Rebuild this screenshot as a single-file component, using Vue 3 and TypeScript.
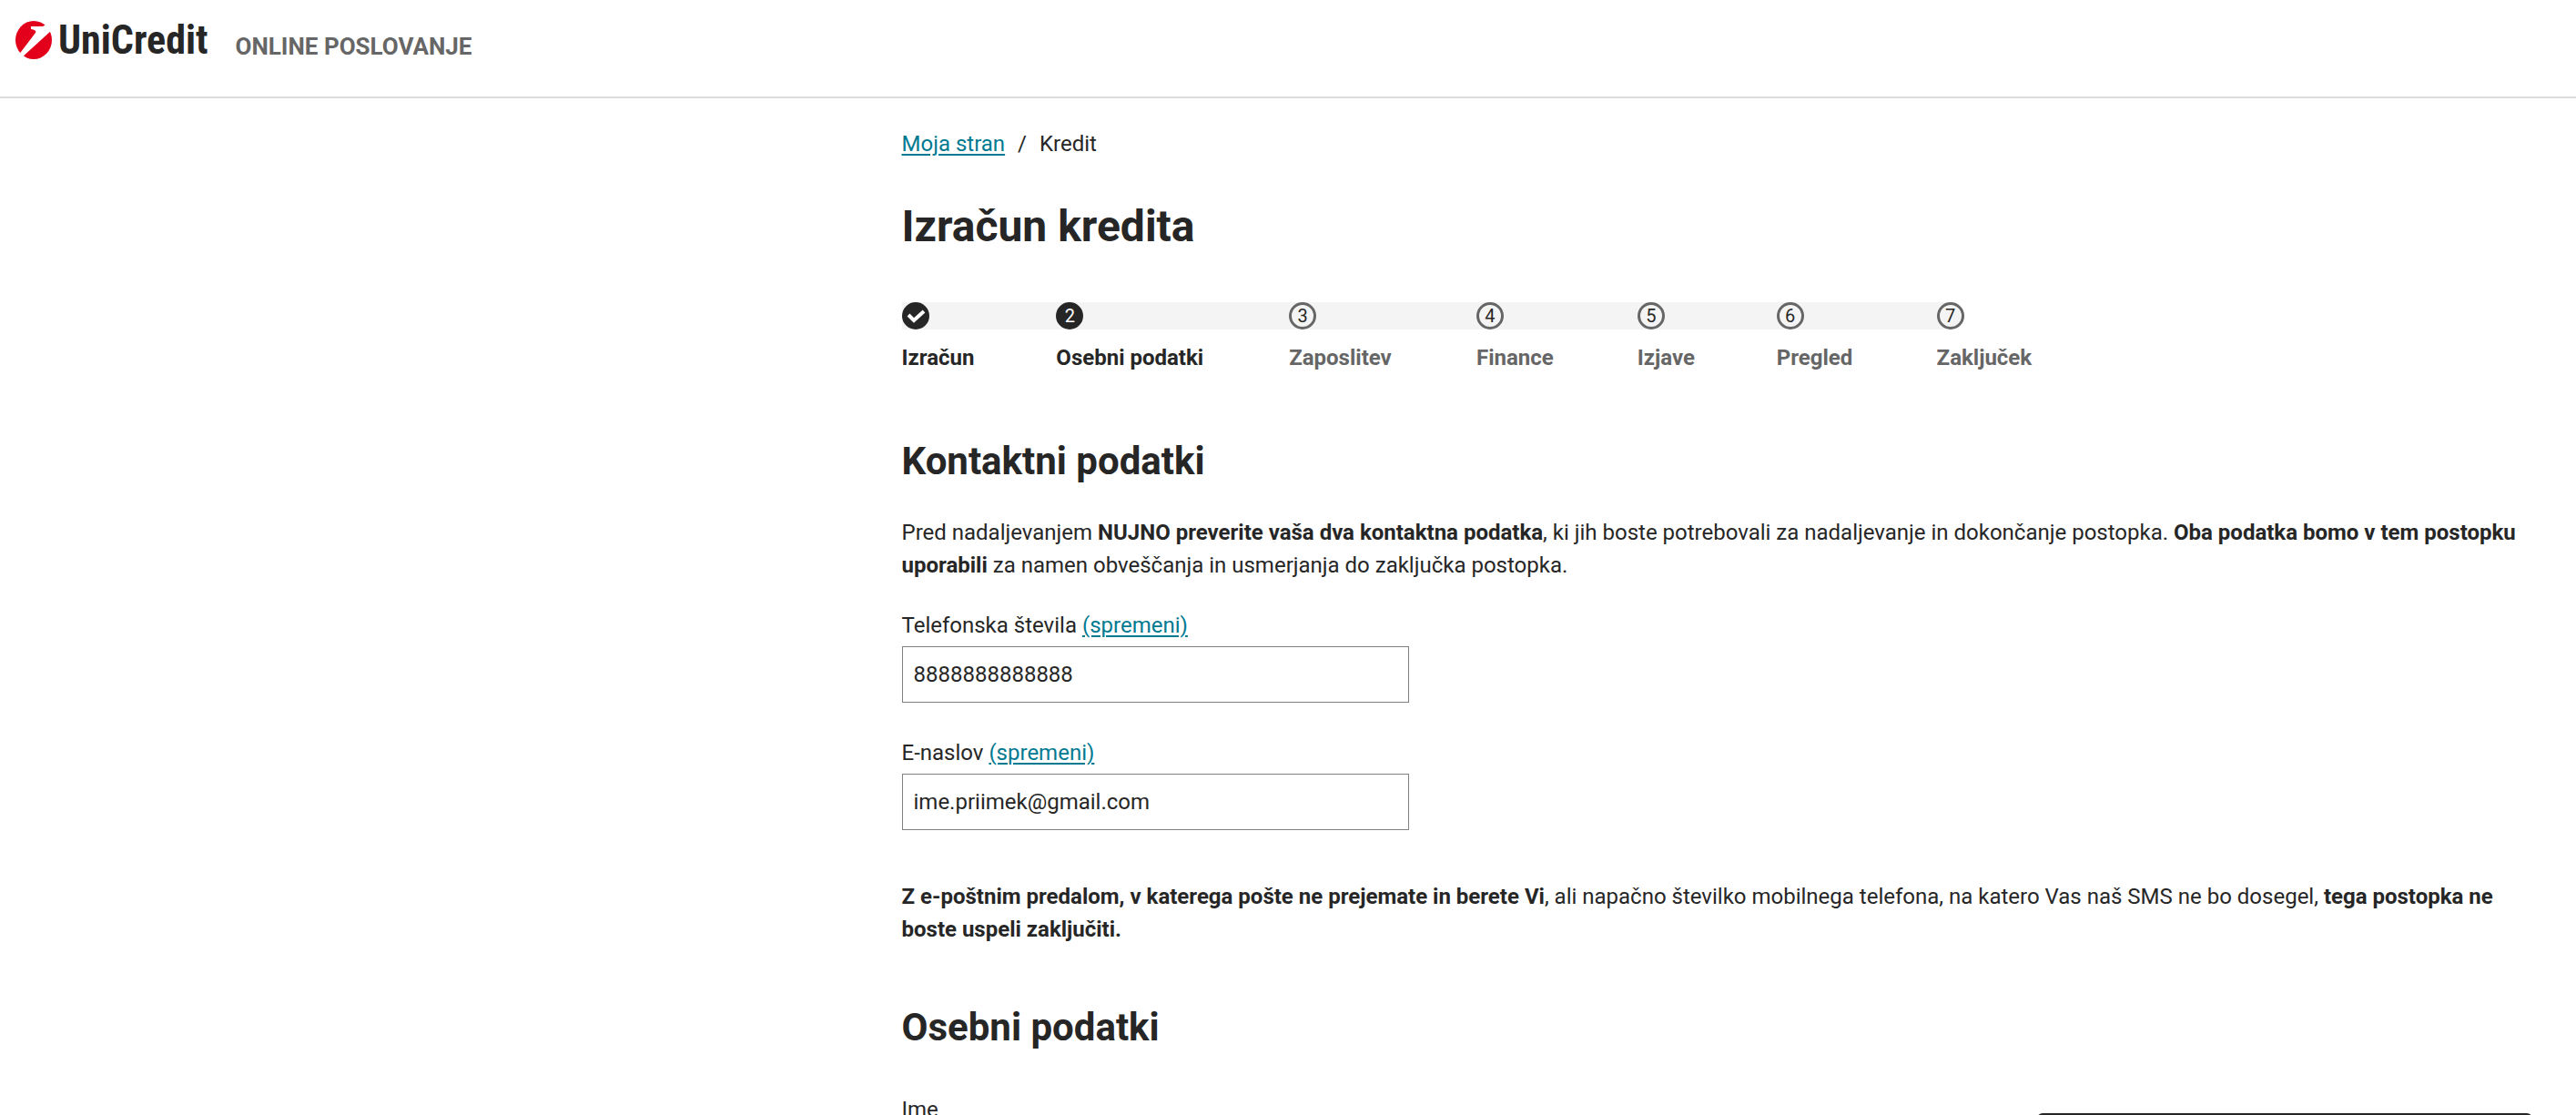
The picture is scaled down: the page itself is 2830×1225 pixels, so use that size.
<script setup lang="ts">
import { ref } from 'vue'

interface Step {
  label: string
  state: 'done' | 'current' | 'todo'
}

const steps: Step[] = [
  { label: 'Izračun', state: 'done' },
  { label: 'Osebni podatki', state: 'current' },
  { label: 'Zaposlitev', state: 'todo' },
  { label: 'Finance', state: 'todo' },
  { label: 'Izjave', state: 'todo' },
  { label: 'Pregled', state: 'todo' },
  { label: 'Zaključek', state: 'todo' },
]

const phone = ref('8888888888888')
const email = ref('ime.priimek@gmail.com')
</script>

<template>
  <div class="page">
    <header class="top">
      <a class="logo" href="#">
        <svg class="mark" viewBox="0 0 40 42" aria-hidden="true">
          <ellipse cx="20" cy="21" rx="20" ry="21" fill="#e2001a" />
          <path d="M17 6 L30 6 L35 3 L41 7 L41 9 L6 41 L3 38 L22 13 C23 11 22 10 17 9 Z" fill="#fff" />
        </svg>
        <span class="wordmark">UniCredit</span>
      </a>
      <span class="tagline">ONLINE POSLOVANJE</span>
    </header>

    <main class="content">
      <nav class="crumbs">
        <a href="#">Moja stran</a>
        <span>/</span>
        <span>Kredit</span>
      </nav>

      <h1>Izračun kredita</h1>

      <ol class="steps">
        <li v-for="(step, i) in steps" :key="step.label" class="step" :class="step.state">
          <div class="track">
            <span class="dot">
              <svg v-if="step.state === 'done'" viewBox="0 0 30 30" aria-hidden="true">
                <path d="M7 14 L13 20 L24 10" fill="none" stroke="#fff" stroke-width="4" />
              </svg>
              <template v-else>{{ i + 1 }}</template>
            </span>
          </div>
          <span class="name">{{ step.label }}</span>
        </li>
      </ol>

      <section>
        <h2>Kontaktni podatki</h2>
        <p>
          Pred nadaljevanjem <strong>NUJNO preverite vaša dva kontaktna podatka</strong>, ki jih boste
          potrebovali za nadaljevanje in dokončanje postopka.
          <strong>Oba podatka bomo v tem postopku uporabili</strong> za namen obveščanja in usmerjanja do
          zaključka postopka.
        </p>
        <div class="field">
          <div><label for="phone">Telefonska števila</label> <a href="#">(spremeni)</a></div>
          <input id="phone" v-model="phone" type="text" />
        </div>
        <div class="field">
          <div><label for="email">E-naslov</label> <a href="#">(spremeni)</a></div>
          <input id="email" v-model="email" type="text" />
        </div>
        <p class="warning">
          <strong>Z e-poštnim predalom, v katerega pošte ne prejemate in berete Vi</strong>, ali napačno
          številko mobilnega telefona, na katero Vas naš SMS ne bo dosegel,
          <strong>tega postopka ne boste uspeli zaključiti.</strong>
        </p>
      </section>

      <section class="personal">
        <h2>Osebni podatki</h2>
        <div class="columns">
          <div class="field">
            <label for="first-name">Ime</label>
            <input id="first-name" type="text" />
          </div>
          <aside class="panel"></aside>
        </div>
      </section>
    </main>
  </div>
</template>

<style>
body {
  margin: 0;
  background: #fff;
}
</style>

<style scoped>
.page {
  height: 100vh;
  overflow: hidden;
  color: #262626;
  font: 24px/36px Roboto, 'Liberation Sans', sans-serif;
}

.top {
  display: flex;
  align-items: flex-start;
  gap: 30px;
  box-sizing: border-box;
  height: 108px;
  padding: 20px 17px 0;
  border-bottom: 2px solid #dcdcdc;
}

a {
  color: #007a91;
  text-decoration-thickness: 2px;
  text-underline-offset: 3px;
}

.logo {
  display: flex;
  align-items: center;
  gap: 7px;
  color: #262626;
  text-decoration: none;
}

.mark {
  width: 40px;
  height: 42px;
}

.wordmark {
  font: 700 44px/48px 'Roboto Condensed', Roboto, sans-serif;
}

.tagline {
  padding-top: 13px;
  color: #666;
  font-size: 26px;
  font-weight: 700;
}

.content {
  margin: 32px 40px 0 35%;
}

.crumbs {
  display: flex;
  gap: 14px;
}

h1 {
  margin: 45px 0 0;
  font-size: 48px;
  line-height: 56px;
}

.steps {
  display: grid;
  grid-template-columns: 170fr 256fr 206fr 177fr 153fr 176fr 104fr;
  width: 69%;
  margin: 55px 0 72px;
  padding: 0;
  list-style: none;
}

.track {
  height: 30px;
  margin-bottom: 13px;
  background: #f4f4f4;
}

.step:last-child .track {
  width: 30px;
  background: linear-gradient(to right, #f4f4f4 50%, transparent 50%);
}

.dot {
  display: flex;
  align-items: center;
  justify-content: center;
  box-sizing: border-box;
  width: 30px;
  height: 30px;
  border: 3px solid #666;
  border-radius: 50%;
  background: #f4f4f4;
  font-size: 20px;
  line-height: 24px;
}

.dot svg {
  flex: none;
  width: 30px;
  height: 30px;
}

.done .dot,
.current .dot {
  border-color: #262626;
  background: #262626;
  color: #fff;
}

.name {
  display: block;
  font-weight: 700;
  white-space: nowrap;
}

.todo .name {
  color: #666;
}

h2 {
  margin: 0 0 36px;
  font-size: 42px;
  line-height: 48px;
}

p {
  margin: 0 0 30px;
}

.field {
  flex: 1;
  margin-bottom: 37px;
}

.field input {
  display: block;
  box-sizing: border-box;
  width: 31%;
  height: 62px;
  margin-top: 5px;
  padding: 0 12px;
  border: 1px solid #808080;
  background: #fff;
  color: #262626;
  font: inherit;
}

.warning {
  margin: 55px 0 66px;
}

.personal h2 {
  margin-bottom: 48px;
}

.columns {
  display: flex;
  align-items: flex-start;
}

.panel {
  box-sizing: border-box;
  width: 544px;
  height: 200px;
  margin: 22px 8px 0 0;
  border: 2px solid #262626;
  border-radius: 6px;
}
</style>
